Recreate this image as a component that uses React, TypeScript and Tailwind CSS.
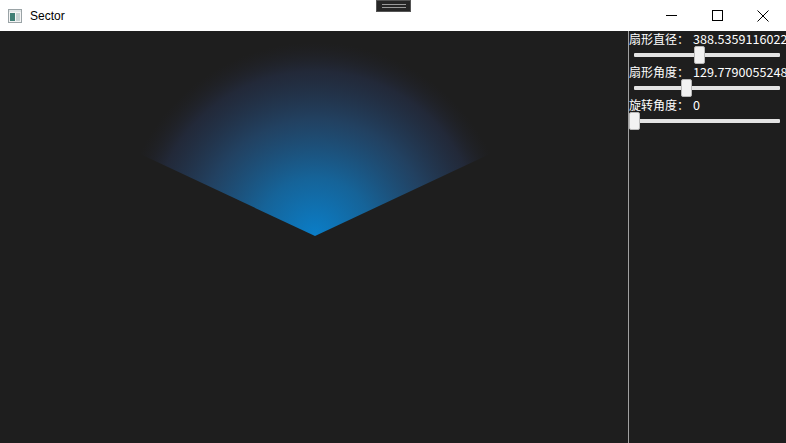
import React from "react";

const font = { fontFamily: '"Noto Sans CJK SC", "Liberation Sans", sans-serif' };

type SliderRowProps = {
    label: string;
    value: string;
    thumb: string;
};

function SliderRow(props: SliderRowProps) {
    return <>
        <div className="flex h-[15px] items-center whitespace-nowrap text-[12px] leading-[15px] text-white">
            <span className="w-[64px] shrink-0">{props.label}</span>
            <span className="text-[12.6px]">{props.value}</span>
        </div>
        <div className="relative h-[18px]">
            <div className="absolute left-[5px] right-[6px] top-[7px] h-[4px] rounded-[1px] bg-[#e3e3e3]" />
            <div className={"absolute top-0 h-[18px] w-[11px] rounded-[2px] border border-[#b8b8b8] bg-[#f2f2f2] " + props.thumb} />
        </div>
    </>
}

function TitleBar() {
    return (
        <div className="relative flex h-[31px] items-center bg-white">
            <svg width="14" height="14" viewBox="0 0 14 14" className="ml-[8px]">
                <rect x="0.5" y="0.5" width="13" height="13" fill="#f4f4f4" stroke="#9aa3a6" />
                <rect x="2" y="4" width="5" height="8" fill="#3f7f75" />
                <rect x="8" y="4" width="4" height="8" fill="#c7d3d3" />
                <rect x="1" y="1" width="12" height="2" fill="#dfe5e6" />
            </svg>
            <span className="ml-[8px] text-[12px] text-black" style={{ fontFamily: '"Liberation Sans", sans-serif' }}>Sector</span>
            <div className="ml-auto flex h-full">
                <div className="flex w-[46px] items-center justify-center">
                    <div className="h-[1px] w-[11px] bg-black" />
                </div>
                <div className="flex w-[46px] items-center justify-center">
                    <div className="h-[11px] w-[11px] border border-black" />
                </div>
                <div className="flex w-[46px] items-center justify-center">
                    <svg width="12" height="12" viewBox="0 0 12 12">
                        <path d="M0.5 0.5 L11.5 11.5 M11.5 0.5 L0.5 11.5" stroke="#000" strokeWidth="1" />
                    </svg>
                </div>
            </div>
            <div className="absolute left-[376px] top-0 flex h-[12px] w-[35px] flex-col items-center justify-center gap-[2px] border border-[#555] bg-[#262626]">
                <div className="h-[1px] w-[24px] bg-[#9a9a9a]" />
                <div className="h-[1px] w-[24px] bg-[#9a9a9a]" />
            </div>
        </div>
    );
}

function SectorCanvas() {
    return (
        <div className="h-full w-[628px] shrink-0">
            <svg width="628" height="412" viewBox="0 0 628 412">
                <defs>
                    <radialGradient id="sectorFill" cx="315" cy="205" r="194" gradientUnits="userSpaceOnUse">
                        <stop offset="0" stopColor="#0a7ec8" stopOpacity="1" />
                        <stop offset="0.3" stopColor="#15679f" stopOpacity="0.95" />
                        <stop offset="0.6" stopColor="#234a72" stopOpacity="0.8" />
                        <stop offset="0.85" stopColor="#25304a" stopOpacity="0.6" />
                        <stop offset="1" stopColor="#222430" stopOpacity="0" />
                    </radialGradient>
                </defs>
                <path d="M315 205 L139.1 122.6 A194.3 194.3 0 0 1 490.9 122.6 Z" fill="url(#sectorFill)" />
            </svg>
        </div>
    );
}

export default function App() {
    return (
        <div className="h-[443px] w-[786px] overflow-hidden bg-[#1e1e1e]" style={font}>
            <TitleBar />
            <div className="flex h-[412px]">
                <SectorCanvas />
                <div className="h-full w-[1px] bg-[#a0a0a0]" />
                <div className="flex min-w-0 flex-1 flex-col overflow-hidden">
                    <SliderRow label="扇形直径：" value="388.5359116022" thumb="left-[65px]" />
                    <SliderRow label="扇形角度：" value="129.7790055248" thumb="left-[52px]" />
                    <SliderRow label="旋转角度：" value="0" thumb="left-0" />
                </div>
            </div>
        </div>
    );
}
